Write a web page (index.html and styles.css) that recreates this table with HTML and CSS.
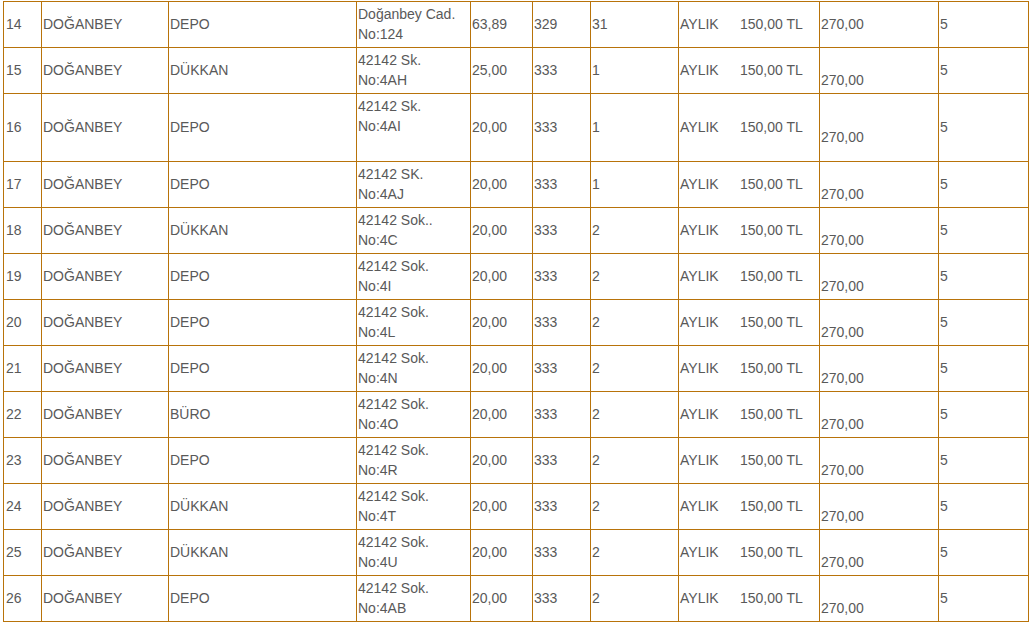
FILE: index.html
```html
<!DOCTYPE html>
<html lang="tr">
<head>
<meta charset="utf-8">
<title>Kira Listesi</title>
<link rel="stylesheet" href="styles.css">
</head>
<body>
<table class="list">
  <colgroup>
    <col class="c-no"><col class="c-mah"><col class="c-type"><col class="c-addr"><col class="c-area"><col class="c-ada"><col class="c-parsel"><col class="c-period"><col class="c-price"><col class="c-last">
  </colgroup>
  <tbody>
    <tr><td>14</td><td>DOĞANBEY</td><td>DEPO</td><td>Doğanbey Cad.<br>No:124</td><td>63,89</td><td>329</td><td>31</td><td><span class="per">AYLIK</span>150,00 TL</td><td>270,00</td><td>5</td></tr>
    <tr><td>15</td><td>DOĞANBEY</td><td>DÜKKAN</td><td>42142 Sk.<br>No:4AH</td><td>25,00</td><td>333</td><td>1</td><td><span class="per">AYLIK</span>150,00 TL</td><td class="lower">270,00</td><td>5</td></tr>
    <tr class="tall"><td>16</td><td>DOĞANBEY</td><td>DEPO</td><td class="top">42142 Sk.<br>No:4AI</td><td>20,00</td><td>333</td><td>1</td><td><span class="per">AYLIK</span>150,00 TL</td><td class="lower">270,00</td><td>5</td></tr>
    <tr><td>17</td><td>DOĞANBEY</td><td>DEPO</td><td>42142 SK.<br>No:4AJ</td><td>20,00</td><td>333</td><td>1</td><td><span class="per">AYLIK</span>150,00 TL</td><td class="lower">270,00</td><td>5</td></tr>
    <tr><td>18</td><td>DOĞANBEY</td><td>DÜKKAN</td><td>42142 Sok..<br>No:4C</td><td>20,00</td><td>333</td><td>2</td><td><span class="per">AYLIK</span>150,00 TL</td><td class="lower">270,00</td><td>5</td></tr>
    <tr><td>19</td><td>DOĞANBEY</td><td>DEPO</td><td>42142 Sok.<br>No:4I</td><td>20,00</td><td>333</td><td>2</td><td><span class="per">AYLIK</span>150,00 TL</td><td class="lower">270,00</td><td>5</td></tr>
    <tr><td>20</td><td>DOĞANBEY</td><td>DEPO</td><td>42142 Sok.<br>No:4L</td><td>20,00</td><td>333</td><td>2</td><td><span class="per">AYLIK</span>150,00 TL</td><td class="lower">270,00</td><td>5</td></tr>
    <tr><td>21</td><td>DOĞANBEY</td><td>DEPO</td><td>42142 Sok.<br>No:4N</td><td>20,00</td><td>333</td><td>2</td><td><span class="per">AYLIK</span>150,00 TL</td><td class="lower">270,00</td><td>5</td></tr>
    <tr><td>22</td><td>DOĞANBEY</td><td>BÜRO</td><td>42142 Sok.<br>No:4O</td><td>20,00</td><td>333</td><td>2</td><td><span class="per">AYLIK</span>150,00 TL</td><td class="lower">270,00</td><td>5</td></tr>
    <tr><td>23</td><td>DOĞANBEY</td><td>DEPO</td><td>42142 Sok.<br>No:4R</td><td>20,00</td><td>333</td><td>2</td><td><span class="per">AYLIK</span>150,00 TL</td><td class="lower">270,00</td><td>5</td></tr>
    <tr><td>24</td><td>DOĞANBEY</td><td>DÜKKAN</td><td>42142 Sok.<br>No:4T</td><td>20,00</td><td>333</td><td>2</td><td><span class="per">AYLIK</span>150,00 TL</td><td class="lower">270,00</td><td>5</td></tr>
    <tr><td>25</td><td>DOĞANBEY</td><td>DÜKKAN</td><td>42142 Sok.<br>No:4U</td><td>20,00</td><td>333</td><td>2</td><td><span class="per">AYLIK</span>150,00 TL</td><td class="lower">270,00</td><td>5</td></tr>
    <tr><td>26</td><td>DOĞANBEY</td><td>DEPO</td><td>42142 Sok.<br>No:4AB</td><td>20,00</td><td>333</td><td>2</td><td><span class="per">AYLIK</span>150,00 TL</td><td class="lower">270,00</td><td>5</td></tr>
  </tbody>
</table>
</body>
</html>
```
FILE: styles.css
```css
html, body {
  margin: 0;
  padding: 0;
  background: #ffffff;
  overflow: hidden;
}

.list {
  margin: 1px 0 0 3px;
  border-collapse: collapse;
  table-layout: fixed;
  width: 1026px;
  font-family: "Liberation Sans", Arial, sans-serif;
  font-size: 14px;
  line-height: 20px;
  color: #595959;
}

.list td {
  border: 1px solid #b8730a;
  padding: 2px 1px 3px 1px;
  vertical-align: middle;
  text-align: left;
  white-space: nowrap;
}

.c-no { width: 38px; }
.c-mah { width: 127px; }
.c-type { width: 188px; }
.c-addr { width: 114px; }
.c-area { width: 62px; }
.c-ada { width: 58px; }
.c-parsel { width: 88px; }
.c-period { width: 141px; }
.c-price { width: 119px; }
.c-last { width: 90px; }

.list td:first-child {
  padding-left: 2px;
}

.per {
  display: inline-block;
  width: 60px;
}

.list td.lower {
  padding-top: 22px;
}

.list tr.tall td.lower {
  height: 42px;
}

.list td.top {
  vertical-align: top;
}
```
